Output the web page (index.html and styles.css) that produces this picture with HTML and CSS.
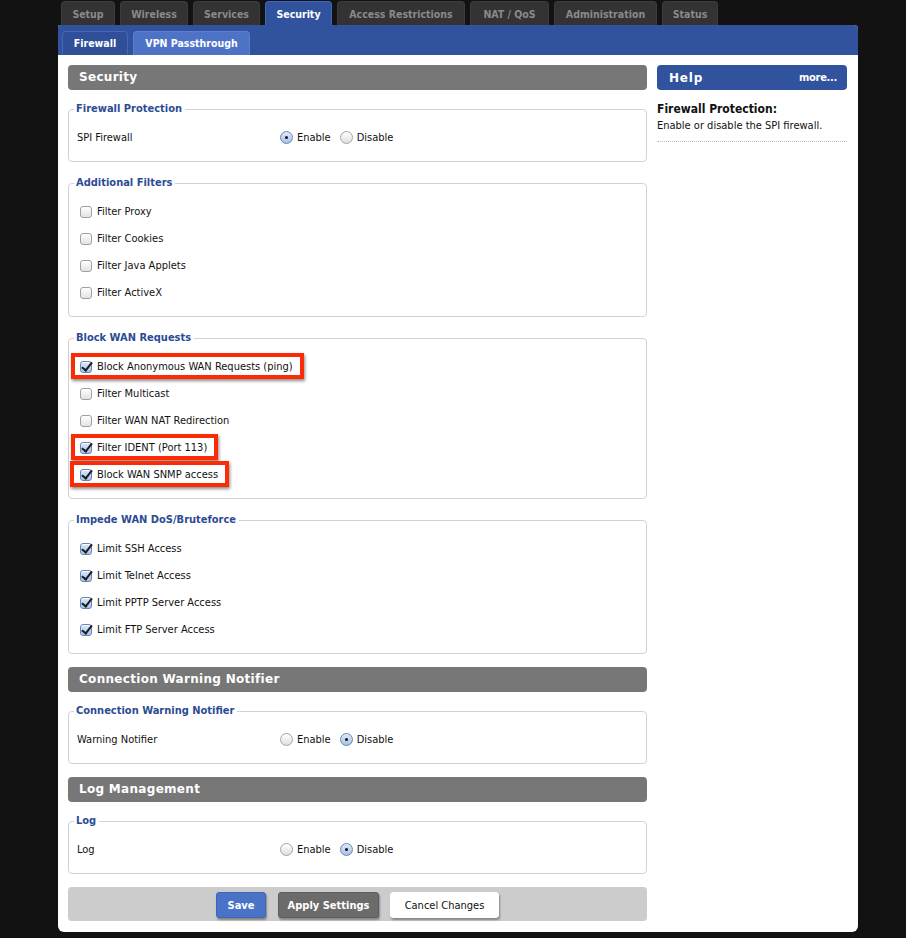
FILE: index.html
```html
<!DOCTYPE html>
<html>
<head>
<meta charset="utf-8">
<title>Security - Firewall</title>
<link rel="stylesheet" href="styles.css">
</head>
<body>
<div class="page">
  <ul class="tabs">
    <li class="tab t-setup">Setup</li>
    <li class="tab t-wireless">Wireless</li>
    <li class="tab t-services">Services</li>
    <li class="tab t-security active">Security</li>
    <li class="tab t-access">Access Restrictions</li>
    <li class="tab t-nat">NAT / QoS</li>
    <li class="tab t-admin">Administration</li>
    <li class="tab t-status">Status</li>
  </ul>
  <div class="panel">
    <div class="subbar">
      <span class="subtab st-fw current">Firewall</span>
      <span class="subtab st-vpn">VPN Passthrough</span>
    </div>
    <div class="content">
      <div class="main">
        <h2 class="sechead">Security</h2>
        <fieldset class="fs">
          <legend>Firewall Protection</legend>
          <div class="row">
            <span class="lbl">SPI Firewall</span>
            <span class="radio on"></span><span class="rtext">Enable</span>
            <span class="radio"></span><span class="rtext">Disable</span>
          </div>
        </fieldset>
        <fieldset class="fs">
          <legend>Additional Filters</legend>
          <div class="row"><span class="cb"></span><span class="ctext">Filter Proxy</span></div>
          <div class="row"><span class="cb"></span><span class="ctext">Filter Cookies</span></div>
          <div class="row"><span class="cb"></span><span class="ctext">Filter Java Applets</span></div>
          <div class="row"><span class="cb"></span><span class="ctext">Filter ActiveX</span></div>
        </fieldset>
        <fieldset class="fs">
          <legend>Block WAN Requests</legend>
          <div class="row hl hl-a"><span class="cb on"></span><span class="ctext">Block Anonymous WAN Requests (ping)</span></div>
          <div class="row"><span class="cb"></span><span class="ctext">Filter Multicast</span></div>
          <div class="row"><span class="cb"></span><span class="ctext">Filter WAN NAT Redirection</span></div>
          <div class="row hl hl-b"><span class="cb on"></span><span class="ctext">Filter IDENT (Port 113)</span></div>
          <div class="row hl hl-c"><span class="cb on"></span><span class="ctext">Block WAN SNMP access</span></div>
        </fieldset>
        <fieldset class="fs">
          <legend>Impede WAN DoS/Bruteforce</legend>
          <div class="row"><span class="cb on"></span><span class="ctext">Limit SSH Access</span></div>
          <div class="row"><span class="cb on"></span><span class="ctext">Limit Telnet Access</span></div>
          <div class="row"><span class="cb on"></span><span class="ctext">Limit PPTP Server Access</span></div>
          <div class="row"><span class="cb on"></span><span class="ctext">Limit FTP Server Access</span></div>
        </fieldset>
        <h2 class="sechead">Connection Warning Notifier</h2>
        <fieldset class="fs">
          <legend>Connection Warning Notifier</legend>
          <div class="row">
            <span class="lbl">Warning Notifier</span>
            <span class="radio"></span><span class="rtext">Enable</span>
            <span class="radio on"></span><span class="rtext">Disable</span>
          </div>
        </fieldset>
        <h2 class="sechead">Log Management</h2>
        <fieldset class="fs">
          <legend>Log</legend>
          <div class="row">
            <span class="lbl">Log</span>
            <span class="radio"></span><span class="rtext">Enable</span>
            <span class="radio on"></span><span class="rtext">Disable</span>
          </div>
        </fieldset>
        <div class="btnbar">
          <button class="btn save">Save</button>
          <button class="btn apply">Apply Settings</button>
          <button class="btn cancel">Cancel Changes</button>
        </div>
      </div>
      <div class="help">
        <div class="helphead"><span class="helptitle">Help</span><span class="more">more...</span></div>
        <div class="helpbody">
          <div class="helpterm">Firewall Protection:</div>
          <div class="helpdesc">Enable or disable the SPI firewall.</div>
        </div>
      </div>
    </div>
  </div>
</div>
</body>
</html>
```

FILE: styles.css
```css
html, body {
  margin: 0;
  padding: 0;
  background: #121212;
}
body {
  font-family: "DejaVu Sans Condensed", "DejaVu Sans", sans-serif;
  font-size: 11px;
  color: #111;
}
.page {
  margin-left: 58px;
  width: 800px;
}
.tabs {
  list-style: none;
  margin: 0;
  padding: 1px 0 0 3px;
  display: flex;
  gap: 5px;
  height: 24px;
}
.tab {
  height: 24px;
  box-sizing: border-box;
  padding: 1px 0 0;
  text-align: center;
  background: #333;
  color: #8a8a8a;
  font-weight: bold;
  font-size: 10.5px;
  line-height: 22px;
  border-radius: 4px 4px 0 0;
  border: 1px solid #3c3c3c;
  border-bottom: none;
}
.t-setup { width: 54px; }
.t-wireless { width: 68px; }
.t-services { width: 67px; }
.t-security { width: 67px; }
.t-access { width: 128px; }
.t-nat { width: 79px; }
.t-admin { width: 103px; }
.t-status { width: 56px; }
.tab.active {
  background: #31529c;
  color: #fff;
  border-color: #4168b8;
}
.panel {
  background: #fff;
  border-radius: 2px 4px 6px 6px;
  padding-bottom: 11px;
}
.subbar {
  background: #31529c;
  height: 30px;
  box-sizing: border-box;
  padding: 6px 0 0 4px;
  display: flex;
  gap: 5px;
  border-radius: 2px 4px 0 0;
}
.subtab {
  height: 24px;
  box-sizing: border-box;
  text-align: center;
  line-height: 23px;
  color: #fff;
  font-weight: bold;
  font-size: 10.5px;
  background: #4d72c6;
  border: 1px solid #5b7fcf;
  border-bottom: none;
  border-radius: 4px 4px 0 0;
}
.st-fw { width: 66px; }
.st-vpn { width: 117px; }
.subtab.current {
  background: #2f5099;
  border-color: #4668b3;
}
.content {
  display: flex;
  gap: 10px;
  padding: 10px 11px 0 10px;
}
.main {
  width: 579px;
}
.help {
  width: 190px;
}
.sechead {
  margin: 0;
  height: 25px;
  line-height: 25px;
  background: #777;
  color: #fff;
  font-family: "DejaVu Sans", sans-serif;
  font-size: 12px;
  font-weight: bold;
  letter-spacing: 0.3px;
  padding-left: 11px;
  border-radius: 4px;
}
.fs + .sechead,
.fs + .btnbar {
  margin-top: 13px;
}
.fs {
  margin: 12px 0 0 0;
  border: 1px solid #d2d2d2;
  border-radius: 4px;
  padding: 8px 8px 10px 8px;
  min-width: 0;
}
.fs + .fs {
  margin-top: 14px;
}
.fs legend {
  margin-left: -3px;
  padding: 0 3px 0 2px;
  color: #2c4b94;
  font-weight: bold;
  font-size: 11px;
  line-height: 14px;
}
.row {
  display: flex;
  align-items: center;
  height: 27px;
  position: relative;
  width: fit-content;
}
.lbl {
  width: 203px;
}
.cb {
  width: 12px;
  height: 12px;
  box-sizing: border-box;
  border: 1px solid #a0a0a0;
  border-radius: 3px;
  background: linear-gradient(#ffffff, #e2e2e2);
  box-shadow: inset 0 1px 0 #fff;
  position: relative;
  margin: 0 5px 0 3px;
}
.cb.on {
  background: linear-gradient(#dbe7f7, #a9c3e8);
  border-color: #6585b8;
}
.cb.on::after {
  content: "";
  position: absolute;
  left: 3px;
  top: -2px;
  width: 4px;
  height: 9px;
  border-right: 2px solid #1d1d1d;
  border-bottom: 2px solid #1d1d1d;
  transform: rotate(38deg);
}
.radio {
  width: 13px;
  height: 13px;
  box-sizing: border-box;
  border: 1px solid #a3a3a3;
  border-radius: 50%;
  background: linear-gradient(#ffffff, #dedede);
  position: relative;
  margin-right: 4px;
}
.radio.on {
  background: linear-gradient(#dfe9f8, #a7c1e6);
  border-color: #6787b8;
}
.radio.on::after {
  content: "";
  position: absolute;
  left: 4px;
  top: 4px;
  width: 3px;
  height: 3px;
  border-radius: 50%;
  background: #111;
}
.rtext {
  margin-right: 9px;
}
.hl::before {
  content: "";
  position: absolute;
  left: -6px;
  right: -11px;
  top: 0;
  bottom: 1px;
  border: 4px solid #fb2b06;
  box-shadow: 1px 2px 3px rgba(0, 0, 0, 0.45);
  pointer-events: none;
}
.hl-c::before {
  left: -7px;
}
.ctext {
  position: relative;
}
.btnbar {
  height: 34px;
  box-sizing: border-box;
  padding-top: 5px;
  background: #cccccc;
  border-radius: 4px;
  display: flex;
  align-items: flex-start;
  justify-content: center;
}
.btn {
  height: 26px;
  font-family: "DejaVu Sans Condensed", "DejaVu Sans", sans-serif;
  font-size: 11px;
  border-radius: 3px;
  padding: 0 11px;
  box-shadow: 1px 2px 2px rgba(0, 0, 0, 0.35);
  margin: 0;
}
.btn.save {
  background: #4a73c8;
  border: 1px solid #3e66b8;
  color: #fff;
  font-weight: bold;
  width: 50px;
  padding: 0;
  margin-right: 12px;
}
.btn.apply {
  background: #6b6b6b;
  border: 1px solid #5e5e5e;
  color: #fff;
  font-weight: bold;
  width: 101px;
  padding: 0;
  margin-right: 11px;
}
.btn.cancel {
  background: #fff;
  border: 1px solid #fff;
  color: #111;
  width: 109px;
  padding: 0;
}
.helphead {
  height: 25px;
  background: #31529c;
  border-radius: 4px;
  display: flex;
  justify-content: space-between;
  align-items: center;
  padding: 0 10px 0 12px;
  color: #fff;
}
.helptitle {
  font-family: "DejaVu Sans", sans-serif;
  font-weight: bold;
  font-size: 12px;
  letter-spacing: 0.8px;
}
.more {
  font-size: 11px;
  font-weight: bold;
  letter-spacing: -0.3px;
}
.helpbody {
  padding: 11px 0 7px 0;
  border-bottom: 1px dotted #bbb;
}
.helpterm {
  font-weight: bold;
  font-size: 12px;
  line-height: 16px;
}
.helpdesc {
  line-height: 17px;
}
```
